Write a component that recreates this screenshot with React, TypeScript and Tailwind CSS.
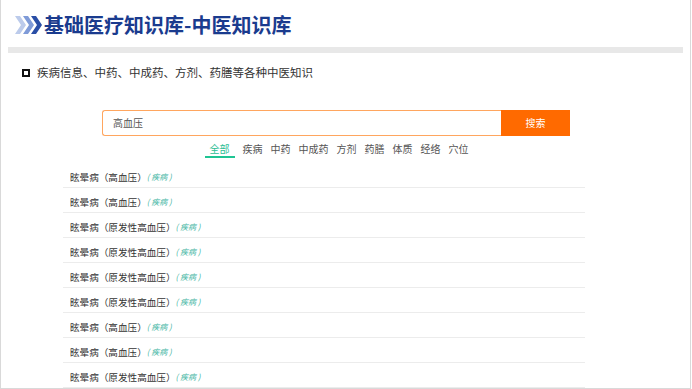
import React from "react";

const tabs = ["全部", "疾病", "中药", "中成药", "方剂", "药膳", "体质", "经络", "穴位"];

const results = [
  "眩晕病（高血压）",
  "眩晕病（高血压）",
  "眩晕病（原发性高血压）",
  "眩晕病（原发性高血压）",
  "眩晕病（原发性高血压）",
  "眩晕病（原发性高血压）",
  "眩晕病（高血压）",
  "眩晕病（高血压）",
  "眩晕病（原发性高血压）",
];

function Chevrons() {
  return (
    <svg width="28" height="18" viewBox="0 0 28 18" className="shrink-0">
      <polygon points="0,0 5,0 11,9 5,18 0,18 6,9" fill="#bccbeb" />
      <polygon points="8,0 13,0 19,9 13,18 8,18 14,9" fill="#7f9bd8" />
      <polygon points="16,0 21,0 27,9 21,18 16,18 22,9" fill="#2a4ea6" />
    </svg>
  );
}

export default function App() {
  return (
    <div
      className="w-[691px] h-[389px] overflow-hidden bg-white border-l border-r border-b border-[#d9d9d9]"
      style={{ fontFamily: '"Noto Sans CJK SC", "Noto Sans", sans-serif' }}
    >
      {/* header */}
      <div className="flex items-center pl-[14px] pt-[12px] h-[38px]">
        <Chevrons />
        <h1 className="ml-[1px] text-[20px] leading-none font-bold text-[#1a3b8e]">
          基础医疗知识库-中医知识库
        </h1>
      </div>
      <div className="mx-[7px] mt-[9px] h-[6px] bg-[#e8e8e8]" />

      {/* intro */}
      <div className="flex items-center pl-[21px] mt-[14px]">
        <span className="w-[8px] h-[8px] border-2 border-[#111] shrink-0" />
        <span className="ml-[7px] text-[11.5px] leading-none text-[#333]">
          疾病信息、中药、中成药、方剂、药膳等各种中医知识
        </span>
      </div>

      {/* search */}
      <div className="pr-[19px]">
        <div className="flex justify-center mt-[31px]">
          <div className="flex w-[468px] h-[26px]">
            <div className="flex-1 flex items-center pl-[10px] border border-r-0 border-[#ffa65f] rounded-l-[3px] text-[10px] text-[#555]">
              高血压
            </div>
            <button className="w-[69px] bg-[#ff6a00] text-white text-[10px]">搜索</button>
          </div>
        </div>

        <div className="flex justify-center gap-2 mt-[5px] ml-[1px]">
          {tabs.map((t, i) =>
            i === 0 ? (
              <span
                key={t}
                className="px-[5px] text-[10px] leading-[15px] text-[#2bbd94] border-b-2 border-[#1fc593]"
              >
                {t}
              </span>
            ) : (
              <span key={t} className="text-[10px] leading-[15px] text-[#555]">
                {t}
              </span>
            )
          )}
        </div>
      </div>

      {/* results */}
      <div className="ml-[62px] w-[522px] mt-[5px]">
        {results.map((r, i) => (
          <div
            key={i}
            className="h-[25px] flex items-center pt-[5px] pl-[7px] border-b border-[#ececec]"
          >
            <span className="text-[9.6px] text-[#333]">{r}</span>
            <span className="text-[8px] italic text-[#3fb5a3] whitespace-pre">( 疾病 )</span>
          </div>
        ))}
      </div>
    </div>
  );
}
